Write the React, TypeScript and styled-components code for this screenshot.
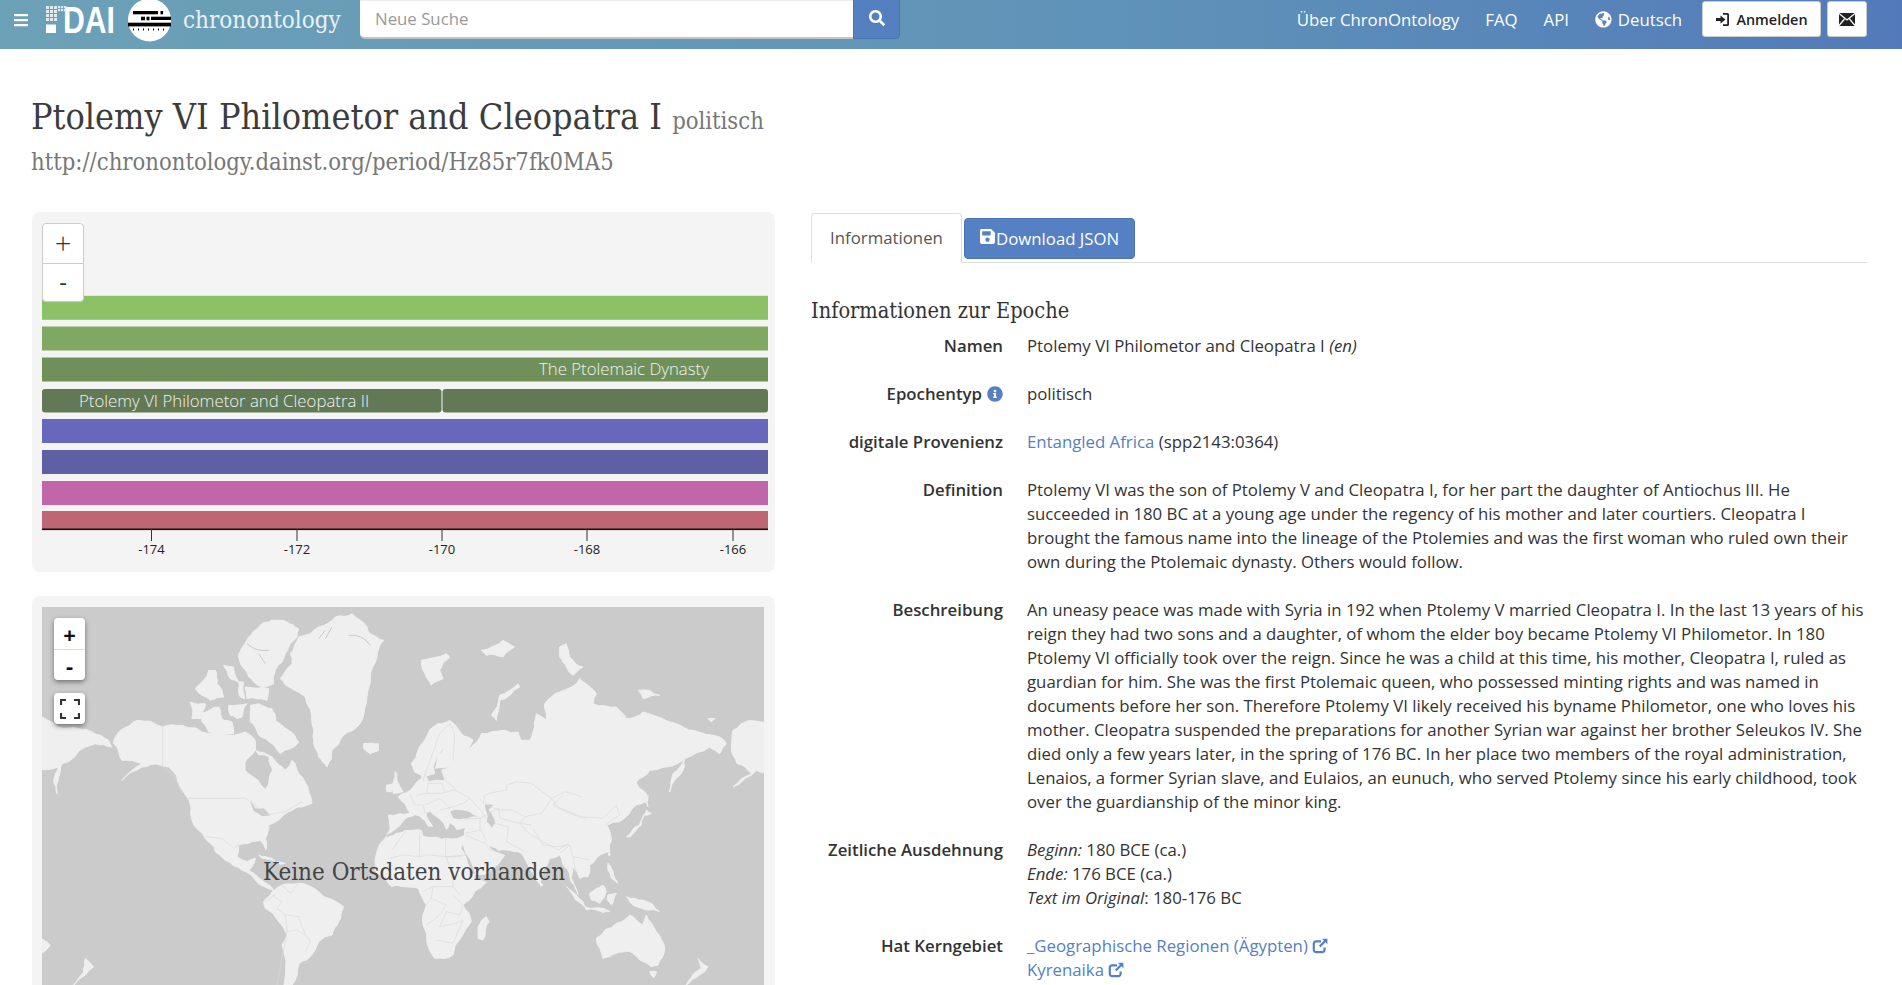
import React from "react";
import styled, { createGlobalStyle } from "styled-components";
import {
  FaBars,
  FaGlobeAmericas,
  FaInfoCircle,
  FaSave,
  FaSearch,
} from "react-icons/fa";

const slab = `"DejaVu Serif Condensed", "DejaVu Serif", serif`;

const GlobalStyle = createGlobalStyle`
  html, body {
    margin: 0;
    height: 985px;
    overflow: hidden;
    background: #fff;
    color: #333;
    font-family: "Open Sans", sans-serif;
    font-size: 16.8px;
    line-height: 24px;
  }
  a { color: #5580c4; text-decoration: none; }
`;

const Navbar = styled.header`
  display: flex;
  align-items: flex-start;
  height: 49px;
  padding: 0 35px 0 13px;
  background: linear-gradient(90deg, #6ca1b7, #5f92b8 60%, #527aba);
  color: #fff;
`;

const MenuButton = styled.button`
  display: flex;
  width: 16px;
  height: 40px;
  padding: 0;
  margin-right: 17px;
  align-items: center;
  background: none;
  border: none;
  color: #fff;
  font-size: 16px;
`;

const Brand = styled.span`
  margin: 3px 0 0 12px;
  width: 177px;
  font-family: ${slab};
  font-size: 24px;
  line-height: 34px;
  color: #e9f1f5;
`;

const SearchForm = styled.form`
  display: flex;
  width: 540px;
  height: 39px;
`;

const SearchInput = styled.input`
  flex: 1;
  min-width: 0;
  padding: 0 15px;
  border: none;
  border-bottom: 2px solid #c4c4c4;
  border-radius: 0 0 0 5px;
  background: #fff;
  font: 16.8px "Open Sans", sans-serif;
  box-shadow: inset 0 1px 1px rgba(0, 0, 0, 0.08);
  &::placeholder { color: #999; }
`;

const SearchButton = styled.button`
  width: 47px;
  border: 1px solid #4a73b2;
  border-top: none;
  border-radius: 0 0 5px 0;
  background: #5580bf;
  color: #fff;
  font-size: 16px;
  svg { display: block; margin: 0 auto 3px; }
`;

const NavRight = styled.nav`
  display: flex;
  align-items: flex-start;
  margin-left: auto;
`;

const NavLink = styled.a`
  display: flex;
  align-items: center;
  gap: 6px;
  margin-right: 26px;
  line-height: 39px;
  color: #fff;
  &:last-of-type { margin-right: 20px; }
`;

const WhiteButton = styled.button<{ $square?: boolean }>`
  display: flex;
  align-items: center;
  justify-content: center;
  gap: 6px;
  width: ${({ $square }) => ($square ? "40px" : "119px")};
  height: 36px;
  margin: 1px 0 0 ${({ $square }) => ($square ? "6px" : "0")};
  padding: 0;
  border: 1px solid #ccc;
  border-radius: 3px;
  background: #fff;
  color: #222;
  font: 600 14.4px "Open Sans", sans-serif;
`;

const Main = styled.main`
  padding: 0 35px 0 32px;
`;

const TitleBlock = styled.div`
  height: 163px;
  padding-top: 46px;
  box-sizing: border-box;
`;

const Title = styled.h1`
  margin: 0 0 0 -1px;
  font-family: ${slab};
  font-size: 35.7px;
  font-weight: 400;
  line-height: 44px;
  color: #3c3c3c;
  small {
    font-size: 23.6px;
    color: #777;
  }
`;

const PeriodUri = styled.div`
  margin: 4px 0 0 -1px;
  font-family: ${slab};
  font-size: 23.6px;
  line-height: 30px;
  color: #777;
`;

const Columns = styled.div`
  display: grid;
  grid-template-columns: 743px 1fr;
  column-gap: 36px;
  align-items: start;
`;

const Panel = styled.section`
  position: relative;
  margin-bottom: 24px;
  padding: 11px 6px 10px 10px;
  border-radius: 8px;
  background: #f4f4f4;
`;

const Timeline = styled.svg`
  display: block;
  width: 727px;
  height: 339px;
  font-family: "Open Sans", sans-serif;
`;

const ZoomButtons = styled.div`
  position: absolute;
  top: 11px;
  left: 10px;
  display: flex;
  flex-direction: column;
  width: 40px;
  border: 1px solid #ccc;
  border-radius: 4px;
  background: #fff;
`;

const ZoomButton = styled.button`
  height: 38.5px;
  padding: 0;
  border: none;
  background: none;
  color: #333;
  font: 300 29px/30px "Open Sans", sans-serif;
  & + & { border-top: 1px solid #ccc; font-weight: 400; font-size: 24px; }
`;

const MapBox = styled.div`
  position: relative;
  width: 722px;
  height: 400px;
  overflow: hidden;
  background: #cbcbcb;
`;

const MapDrawing = styled.svg`
  display: block;
  width: 722px;
  height: 400px;
`;

const MapControls = styled.div`
  position: absolute;
  top: 11px;
  left: 12px;
  display: flex;
  flex-direction: column;
  gap: 13px;
`;

const MapControlGroup = styled.div`
  width: 31px;
  border-radius: 4px;
  background: #fff;
  box-shadow: 0 2px 5px rgba(0, 0, 0, 0.45);
`;

const MapControlButton = styled.button`
  display: flex;
  align-items: center;
  justify-content: center;
  width: 31px;
  height: 31px;
  padding: 0;
  border: none;
  background: none;
  color: #111;
  font: 700 22px "Open Sans", sans-serif;
  & + & { border-top: 1px solid #ddd; }
`;

const MapNotice = styled.div`
  position: absolute;
  top: 252px;
  left: 0;
  width: 744px;
  text-align: center;
  font-family: ${slab};
  font-size: 24px;
  line-height: 26px;
  color: #444;
`;

const Tabs = styled.div`
  display: flex;
  align-items: flex-end;
  height: 50px;
  border-bottom: 1px solid #ddd;
`;

const ActiveTab = styled.div`
  box-sizing: border-box;
  width: 151px;
  height: 50px;
  margin-bottom: -1px;
  padding-top: 12px;
  border: 1px solid #ddd;
  border-bottom-color: #fff;
  border-radius: 4px 4px 0 0;
  background: #fff;
  text-align: center;
  color: #555;
`;

const DownloadButton = styled.button`
  display: flex;
  align-items: center;
  width: 171px;
  height: 41px;
  margin: 0 0 3px 2px;
  padding: 0 0 0 14px;
  border: 1px solid #4a73b2;
  border-radius: 4px;
  background: #5580c4;
  color: #fff;
  font: 16.8px "Open Sans", sans-serif;
  svg { margin-bottom: 4px; font-size: 17px; }
`;

const SectionTitle = styled.h2`
  margin: 36px 0 11px;
  font-family: ${slab};
  font-size: 21.6px;
  font-weight: 400;
  line-height: 24px;
`;

const InfoList = styled.dl`
  display: grid;
  grid-template-columns: 192px 1fr;
  column-gap: 24px;
  row-gap: 24px;
  margin: 0;
`;

const InfoLabel = styled.dt`
  font-weight: 600;
  text-align: right;
  svg { margin-left: 5px; color: #5580c4; font-size: 16px; vertical-align: -2px; }
`;

const InfoValue = styled.dd`
  margin: 0;
`;

const ExtIconSvg = styled.svg`
  margin-left: 4px;
  vertical-align: -2px;
`;

const ExtIcon: React.FC = () => (
  <ExtIconSvg width="16" height="16" viewBox="0 0 16 16" aria-hidden="true">
    <path d="M9 3.4H4.2A2.4 2.4 0 0 0 1.8 5.8v6a2.4 2.4 0 0 0 2.4 2.4h6a2.4 2.4 0 0 0 2.4-2.4V9.5" fill="none" stroke="#5580c4" strokeWidth="2.2" />
    <path d="M10 .8h5.4v5.4l-1.9-1.9-5 5-1.6-1.6 5-5z" fill="#5580c4" />
  </ExtIconSvg>
);

const bars = [
  { y: 72.8, h: 24, fill: "#8dc168" },
  { y: 103.5, h: 24, fill: "#7fa860" },
  { y: 134.5, h: 24, fill: "#6f9159" },
  { y: 196, h: 24, fill: "#6767bb" },
  { y: 227, h: 24, fill: "#5f5fa5" },
  { y: 258, h: 24, fill: "#c066a9" },
  { y: 288, h: 18, fill: "#bf6675" },
];

const ticks = [
  { x: 109.5, label: "-174" },
  { x: 255, label: "-172" },
  { x: 400, label: "-170" },
  { x: 545, label: "-168" },
  { x: 691, label: "-166" },
];

const land = [
  // north america
  "235,370 285,340 362,360 420,355 500,380 560,385 610,375 640,400 640,430 690,450 730,490 750,460 770,500 800,555 810,589 780,600 740,614 680,654 670,694 672,728 655,700 630,704 590,714 585,749 615,764 640,754 620,789 660,819 675,830 695,850 640,820 600,790 550,760 520,735 490,695 450,640 445,594 430,564 415,540 380,480 355,475 300,480 240,520 300,470 240,460 225,420 215,410",
  // south america
  "665,884 690,854 720,834 770,829 830,854 905,899 890,944 870,984 830,1004 800,1054 770,1074 750,1134 740,1200 705,1200 720,1014 735,984 670,904",
  // greenland, arctic canada
  "930,20 975,60 985,80 1025,100 1005,150 985,210 975,270 960,340 900,390 870,430 855,480 830,450 815,400 810,350 790,270 750,245 715,215 750,170 745,140 770,90 830,60 880,30",
  "650,60 690,40 735,45 770,65 765,90 745,110 730,140 720,165 700,190 695,230 665,240 635,225 610,190 590,150 605,115 620,90",
  "545,175 575,180 590,225 565,215",
  "460,245 500,190 520,190 525,230 545,270 505,280 480,265",
  "445,285 490,290 475,335 450,335",
  "475,320 530,300 545,340 570,345 575,380 500,375 480,345",
  "560,295 615,290 600,330 585,335 565,325",
  "625,295 650,290 690,305 700,340 740,370 770,405 745,425 715,440 690,410 650,385 625,345",
  "610,240 680,245 675,280 615,275",
  "590,225 605,225 608,275 595,270",
  "965,410 1010,410 1010,430 985,440 965,425",
  "650,744 690,754 700,764 660,754",
  "705,764 730,769 715,772",
  // wrapped edges
  "-20,325 50,360 110,365 150,375 200,400 210,420 160,410 130,420 60,470 50,510 45,560 35,520 50,480 -20,485",
  "2073,370 2123,340 2190,350 2190,510 2143,490 2073,540 2130,500 2085,470 2068,420",
  "-20,974 25,1014 -20,1074",
  "130,1054 155,1079 130,1104 95,1134 125,1095",
  // eurasia and africa
  "1039,624 1104,619 1069,569 1114,539 1139,514 1139,494 1159,524 1209,519 1199,489 1234,479 1179,484 1189,444 1208,420 1183,450 1173,480 1178,500 1150,510 1128,500 1118,495 1108,470 1128,430 1158,380 1188,350 1223,340 1248,365 1293,400 1278,425 1308,400 1318,380 1383,370 1428,375 1438,400 1463,400 1473,375 1478,360 1483,320 1513,340 1508,290 1553,255 1613,215 1663,260 1653,290 1723,300 1753,335 1803,315 1903,350 1953,370 2033,390 2053,410 2033,440 2003,420 1928,455 1893,500 1883,555 1918,500 1928,455 1873,480 1823,490 1783,525 1813,560 1818,580 1783,594 1733,644 1693,654 1708,694 1703,734 1663,754 1643,774 1638,809 1613,814 1593,779 1588,814 1608,864 1588,826 1568,779 1553,744 1523,754 1493,832 1453,764 1428,734 1385,728 1369,730 1334,704 1360,735 1388,745 1345,790 1295,805 1300,815 1333,826 1298,854 1263,894 1288,944 1233,1044 1178,1054 1143,954 1153,894 1130,845 1086,839 1050,839 1000,794 1000,754 1040,674 1045,664",
  "1064,499 1074,539 1084,554 1054,559 1054,524 1059,494",
  "1034,534 1054,529 1049,554 1034,554",
  "1138,160 1213,140 1223,150 1193,190 1203,215 1168,235 1143,190",
  "1318,130 1383,100 1418,120 1383,150 1333,145",
  "1428,230 1433,240 1373,280 1363,340 1348,325 1373,265",
  "1553,120 1573,110 1583,150 1623,180 1593,205 1573,180 1553,150",
  "1788,250 1823,250 1853,265 1803,275",
  "1998,335 2018,335 2008,345",
  "1308,959 1333,929 1341,944 1323,999 1308,994",
  // asia pacific
  "1663,994 1723,949 1763,924 1783,939 1803,954 1813,924 1843,974 1868,1024 1848,1074 1828,1079 1793,1059 1763,1034 1723,1039 1683,1054",
  "1968,1054 1998,1079 1973,1104 1933,1134 1963,1094 1978,1084",
  "1823,1094 1843,1094 1835,1112",
  "1573,839 1623,884 1628,899 1598,874",
  "1628,899 1703,914 1683,916 1633,909",
  "1643,859 1683,834 1693,854 1673,889 1648,879",
  "1698,864 1723,859 1708,894 1695,879",
  "1753,869 1803,879 1853,914 1813,909 1783,899 1763,884",
  "1698,769 1713,794 1728,829 1708,814 1698,789",
  "1753,689 1793,654 1808,619 1798,654 1765,690",
  "1813,609 1828,619 1810,625",
  "1813,574 1818,564 1818,600",
  "1701,734 1705,744 1699,745",
  "1495,826 1503,834 1496,838",
];

const waters = [
  "610,470 640,430 650,445 680,450 690,490 680,520 670,545 650,520 610,490",
  "625,579 640,604 665,604 685,625 660,628 635,612",
  "1034,684 1059,669 1084,644 1119,624 1134,629 1159,659 1174,659 1154,619 1164,614 1204,649 1214,669 1224,649 1244,669 1269,662 1266,684 1219,694 1179,689 1144,686 1139,669 1089,669 1054,684 1034,692",
  "1224,614 1254,609 1294,624 1309,629 1269,634 1234,634",
  "1329,594 1354,594 1339,609 1359,649 1349,662 1334,644 1334,614",
  "1263,714 1298,799 1283,804 1258,724",
];

// fjords and channels cut into the land
const inlets = [
  "M615,110 Q640,135 680,130",
  "M650,140 L670,170",
  "M920,85 Q960,80 985,115",
  "M850,70 L830,95",
  "M870,60 L850,95",
];

// country borders, all in map drawing coordinates
const borders = [
  "M362,360 L362,478 L400,510 L420,560",
  "M440,574 L610,574 L640,594 L670,624 L730,614 L780,584",
  "M490,689 L540,694 L575,724 L590,714",
  "M690,864 L720,884 L705,904 L730,924 L770,929 L790,984 L805,1004 L790,1034",
  "M730,924 L735,974 L705,1134",
  "M735,974 L765,969 L790,984",
  "M720,834 L745,859 L770,829",
  "M670,884 L700,864",
  "M1143,520 L1168,450 L1193,380 L1223,350 L1238,380 L1233,460",
  "M1124,564 L1154,559 L1199,559 L1234,549 L1249,554 L1284,574 L1264,589 L1234,599 L1194,609",
  "M1159,529 L1199,529 L1209,554",
  "M1209,519 L1244,549",
  "M1104,564 L1119,594 L1144,594 L1149,619",
  "M1149,594 L1194,574 L1219,599 L1224,609",
  "M1159,529 L1154,559",
  "M1284,574 L1319,614 L1329,634",
  "M1264,636 L1314,634 L1314,669 L1269,679",
  "M1314,634 L1369,604 L1374,634 L1434,649 L1469,654",
  "M1329,569 L1324,589 L1369,609 L1409,609 L1449,629",
  "M1324,569 L1339,559 L1394,549 L1394,534 L1424,524 L1469,529 L1494,549 L1529,574 L1569,554 L1619,569",
  "M1529,574 L1549,604 L1609,629 L1629,634",
  "M1449,629 L1499,619 L1529,574",
  "M1449,629 L1434,649 L1449,669 L1469,684 L1494,699 L1549,729 L1579,709",
  "M1399,659 L1394,704 L1449,734",
  "M1314,664 L1334,704",
  "M1269,684 L1329,709 L1349,734",
  "M1399,659 L1359,649",
  "M1133,674 L1133,749 L1163,744 L1213,749 L1263,749",
  "M1211,689 L1211,749 L1273,744",
  "M1050,729 L1090,674",
  "M1040,754 L1085,744 L1133,749",
  "M1213,749 L1233,814 L1233,839 L1253,864",
  "M1173,839 L1233,839",
  "M1143,854 L1173,839 L1168,874 L1153,894",
  "M1168,874 L1213,894 L1193,924 L1153,954",
  "M1233,864 L1263,894 L1253,924 L1213,914 L1193,959 L1243,949 L1263,939 L1233,1009 L1183,999",
  "M1473,664 L1503,714 L1543,719 L1583,714 L1593,749 L1643,759",
  "M1553,739 L1583,714",
  "M1593,749 L1603,804",
  "M1688,654 L1733,624 L1723,594 L1683,634 L1618,629 L1533,594 L1563,564",
];

// breaks long straight edges of a traced outline so coasts don't look ruled
const roughen = (points: string) => {
  let p = points.split(" ").map((s) => s.split(",").map(Number));
  for (let pass = 0; pass < 2; pass++) {
    const out: number[][] = [];
    p.forEach((a, i) => {
      const b = p[(i + 1) % p.length];
      out.push(a);
      const dx = b[0] - a[0];
      const dy = b[1] - a[1];
      if (Math.hypot(dx, dy) < 18) return;
      const seed = Math.sin(a[0] * 12.9898 + a[1] * 78.233 + b[0] * 3.1) * 43758.5453;
      const k = (seed - Math.floor(seed) - 0.5) * 0.22;
      out.push([(a[0] + b[0]) / 2 - dy * k, (a[1] + b[1]) / 2 + dx * k]);
    });
    p = out;
  }
  return p.map((c) => `${c[0].toFixed(1)},${c[1].toFixed(1)}`).join(" ");
};

const Logo: React.FC = () => (
  <svg width="125" height="44" viewBox="0 0 125 44" aria-label="iDAI">
    {[0, 1, 2, 3].map((r) =>
      [0, 1, 2].map((c) => (
        <rect key={`${r}-${c}`} x={c * 4} y={6 + r * 4} width="3" height="3" fill="#dfeaf0" />
      ))
    )}
    <rect x="0" y="24.5" width="10" height="8.5" fill="#fff" />
    <text x="17" y="33" fontFamily="Liberation Sans, sans-serif" fontWeight="700" fontSize="36" fill="#fff" textLength="52" lengthAdjust="spacingAndGlyphs">
      DAI
    </text>
    {[0, 1].map((r) =>
      [0, 1, 2].map((c) => (
        <rect key={`d${r}-${c}`} x={12 + c * 3} y={6 + r * 3} width="2.2" height="2.2" fill="#dfeaf0" />
      ))
    )}
    <circle cx="103.5" cy="20" r="21.5" fill="#fff" />
    <rect x="87" y="11" width="25" height="3.3" />
    <rect x="114.5" y="11" width="2.6" height="3.3" />
    <rect x="95" y="16.7" width="4" height="3.6" />
    <rect x="100.5" y="16.7" width="3" height="3.6" />
    <rect x="105" y="16.7" width="20" height="3.3" />
    <rect x="82" y="22.7" width="43" height="3.7" />
    {[87, 92, 97, 102, 107, 112, 117].map((x) => (
      <rect key={x} x={x} y="28.5" width="1" height="2" />
    ))}
  </svg>
);

const LoginIcon: React.FC = () => (
  <svg width="15" height="15" viewBox="0 0 15 15" fill="#222" aria-hidden="true">
    <path d="M8 1h4.5A1.5 1.5 0 0 1 14 2.5v10a1.5 1.5 0 0 1-1.5 1.5H8v-1.8h4.2V2.8H8z" />
    <path d="M5.5 3.5 10.5 7.5 5.5 11.5V9H1V6h4.5z" />
  </svg>
);

const EnvelopeIcon: React.FC = () => (
  <svg width="16" height="13" viewBox="0 0 16 13" aria-hidden="true">
    <rect width="16" height="13" fill="#222" />
    <path d="M0 .5 8 7l8-6.5M0 12.5l5.5-6.5M16 12.5 10.5 6" fill="none" stroke="#fff" strokeWidth="1.3" />
  </svg>
);

const WorldMap: React.FC = () => (
  <MapDrawing viewBox="0 0 2166 1200" aria-hidden="true">
    <defs>
      <filter id="soft">
        <feGaussianBlur stdDeviation="1.4" />
      </filter>
    </defs>
    <g filter="url(#soft)">
      <g fill="#efefef" stroke="#efefef" strokeWidth="3" strokeLinejoin="round">
        {land.map((points) => (
          <polygon key={points} points={roughen(points)} />
        ))}
      </g>
      <g fill="#cbcbcb">
        {waters.map((points) => (
          <polygon key={points} points={roughen(points)} />
        ))}
      </g>
      <g fill="none" stroke="#cbcbcb" strokeWidth="3">
        {inlets.map((d) => (
          <path key={d} d={d} />
        ))}
      </g>
      <g fill="none" stroke="#dadada" strokeWidth="2">
        {borders.map((d) => (
          <path key={d} d={d} />
        ))}
      </g>
    </g>
  </MapDrawing>
);

const App: React.FC = () => (
  <>
    <GlobalStyle />
    <Navbar>
      <MenuButton aria-label="Menü">
        <FaBars />
      </MenuButton>
      <Logo />
      <Brand>chronontology</Brand>
      <SearchForm>
        <SearchInput placeholder="Neue Suche" />
        <SearchButton aria-label="Suchen">
          <FaSearch />
        </SearchButton>
      </SearchForm>
      <NavRight>
        <NavLink>Über ChronOntology</NavLink>
        <NavLink>FAQ</NavLink>
        <NavLink>API</NavLink>
        <NavLink>
          <FaGlobeAmericas />
          Deutsch
        </NavLink>
        <WhiteButton>
          <LoginIcon />
          Anmelden
        </WhiteButton>
        <WhiteButton $square aria-label="Kontakt">
          <EnvelopeIcon />
        </WhiteButton>
      </NavRight>
    </Navbar>
    <Main>
      <TitleBlock>
        <Title>
          Ptolemy VI Philometor and Cleopatra I <small>politisch</small>
        </Title>
        <PeriodUri>http://chronontology.dainst.org/period/Hz85r7fk0MA5</PeriodUri>
      </TitleBlock>
      <Columns>
        <div>
          <Panel>
            <Timeline viewBox="0 0 727 339">
              {bars.map((bar) => (
                <rect key={bar.y} x="0" y={bar.y} width="726" height={bar.h} fill={bar.fill} />
              ))}
              <rect x="0" y="166" width="399.5" height="23.5" rx="3" fill="#627955" />
              <rect x="400.5" y="166" width="325.5" height="23.5" rx="3" fill="#627955" />
              <text x="497" y="152" fontSize="16.8" fontWeight="300" fill="#f2f2f2">
                The Ptolemaic Dynasty
              </text>
              <text x="37" y="183.5" fontSize="16.8" fontWeight="300" fill="#f2f2f2">
                Ptolemy VI Philometor and Cleopatra II
              </text>
              <rect x="0" y="305.5" width="726" height="1.6" fill="#111" />
              {ticks.map((tick) => (
                <g key={tick.x}>
                  <rect x={tick.x - 0.5} y="306" width="1" height="12" fill="#333" />
                  <text x={tick.x} y="331" fontSize="13" textAnchor="middle" fill="#222">
                    {tick.label}
                  </text>
                </g>
              ))}
            </Timeline>
            <ZoomButtons>
              <ZoomButton>+</ZoomButton>
              <ZoomButton>-</ZoomButton>
            </ZoomButtons>
          </Panel>
          <Panel>
            <MapBox>
              <WorldMap />
              <MapControls>
                <MapControlGroup>
                  <MapControlButton>+</MapControlButton>
                  <MapControlButton>-</MapControlButton>
                </MapControlGroup>
                <MapControlGroup>
                  <MapControlButton aria-label="Vollbild">
                    <svg width="20" height="20" viewBox="0 0 20 20" fill="none" stroke="#333" strokeWidth="2.2">
                      <path d="M1 6V1h5M14 1h5v5M19 14v5h-5M6 19H1v-5" />
                    </svg>
                  </MapControlButton>
                </MapControlGroup>
              </MapControls>
              <MapNotice>Keine Ortsdaten vorhanden</MapNotice>
            </MapBox>
          </Panel>
        </div>
        <div>
          <Tabs>
            <ActiveTab>Informationen</ActiveTab>
            <DownloadButton>
              <FaSave />
              Download JSON
            </DownloadButton>
          </Tabs>
          <SectionTitle>Informationen zur Epoche</SectionTitle>
          <InfoList>
            <InfoLabel>Namen</InfoLabel>
            <InfoValue>
              Ptolemy VI Philometor and Cleopatra I <em>(en)</em>
            </InfoValue>
            <InfoLabel>
              Epochentyp
              <FaInfoCircle />
            </InfoLabel>
            <InfoValue>politisch</InfoValue>
            <InfoLabel>digitale Provenienz</InfoLabel>
            <InfoValue>
              <a>Entangled Africa</a> (spp2143:0364)
            </InfoValue>
            <InfoLabel>Definition</InfoLabel>
            <InfoValue>
              Ptolemy VI was the son of Ptolemy V and Cleopatra I, for her part the daughter of Antiochus III. He
              succeeded in 180 BC at a young age under the regency of his mother and later courtiers. Cleopatra I
              brought the famous name into the lineage of the Ptolemies and was the first woman who ruled own their
              own during the Ptolemaic dynasty. Others would follow.
            </InfoValue>
            <InfoLabel>Beschreibung</InfoLabel>
            <InfoValue>
              An uneasy peace was made with Syria in 192 when Ptolemy V married Cleopatra I. In the last 13 years of his
              reign they had two sons and a daughter, of whom the elder boy became Ptolemy VI Philometor. In 180
              Ptolemy VI officially took over the reign. Since he was a child at this time, his mother, Cleopatra I, ruled as
              guardian for him. She was the first Ptolemaic queen, who possessed minting rights and was named in
              documents before her son. Therefore Ptolemy VI likely received his byname Philometor, one who loves his
              mother. Cleopatra suspended the preparations for another Syrian war against her brother Seleukos IV. She
              died only a few years later, in the spring of 176 BC. In her place two members of the royal administration,
              Lenaios, a former Syrian slave, and Eulaios, an eunuch, who served Ptolemy since his early childhood, took
              over the guardianship of the minor king.
            </InfoValue>
            <InfoLabel>Zeitliche Ausdehnung</InfoLabel>
            <InfoValue>
              <em>Beginn:</em> 180 BCE (ca.)
              <br />
              <em>Ende:</em> 176 BCE (ca.)
              <br />
              <em>Text im Original</em>: 180-176 BC
            </InfoValue>
            <InfoLabel>Hat Kerngebiet</InfoLabel>
            <InfoValue>
              <a>
                _Geographische Regionen (Ägypten)
                <ExtIcon />
              </a>
              <br />
              <a>
                Kyrenaika
                <ExtIcon />
              </a>
            </InfoValue>
          </InfoList>
        </div>
      </Columns>
    </Main>
  </>
);

export default App;
